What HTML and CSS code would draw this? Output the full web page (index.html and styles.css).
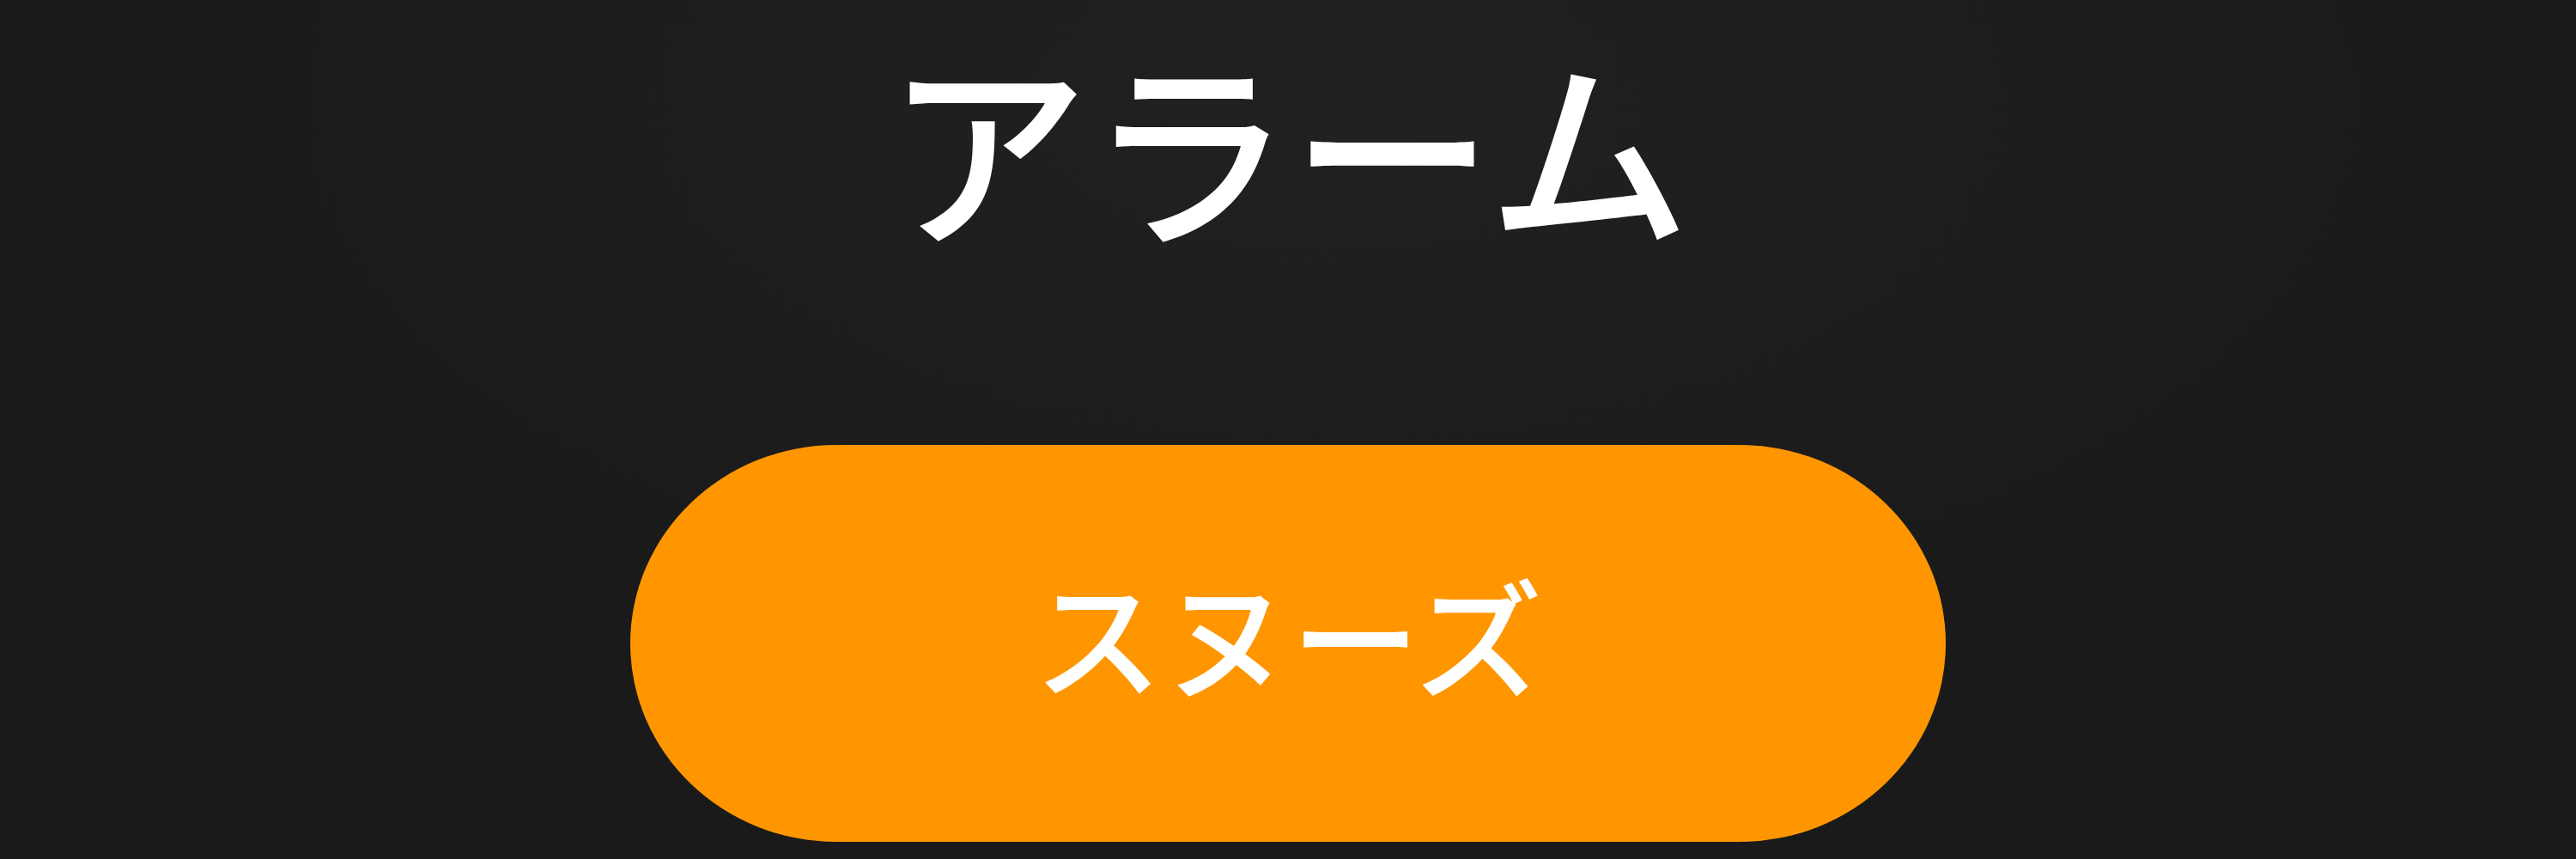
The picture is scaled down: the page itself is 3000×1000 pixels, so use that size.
FILE: index.html
```html
<!DOCTYPE html>
<html lang="ja">
<head>
<meta charset="utf-8">
<title>アラーム</title>
<link rel="stylesheet" href="styles.css">
</head>
<body>
<main class="screen">
  <h1 class="title">アラーム</h1>
  <button class="snooze" type="button">スヌーズ</button>
</main>
</body>
</html>
```
FILE: styles.css
```css
html, body {
  margin: 0;
  padding: 0;
  background: #1b1b1b;
}
.screen {
  width: 3000px;
  height: 1000px;
  box-sizing: border-box;
  display: flex;
  flex-direction: column;
  align-items: center;
  background: radial-gradient(ellipse 1400px 700px at 1550px 120px, #22211f 0%, #1e1e1d 45%, #1a1a1a 100%);
  font-family: "Noto Sans CJK JP", "Noto Sans", sans-serif;
  color: #ffffff;
}
.title {
  margin: 49px 0 0 0;
  font-size: 236px;
  line-height: 1;
  font-weight: 500;
  color: #ffffff;
}
.snooze {
  margin-top: 233px;
  width: 1532px;
  height: 462px;
  box-sizing: border-box;
  border: none;
  border-radius: 240px / 231px;
  background: #ff9600;
  color: #ffffff;
  font-family: "Noto Sans CJK JP", "Noto Sans", sans-serif;
  font-size: 150px;
  font-weight: 500;
  line-height: 1;
  display: flex;
  align-items: center;
  justify-content: center;
  padding: 0 0 24px 0;
}
```
